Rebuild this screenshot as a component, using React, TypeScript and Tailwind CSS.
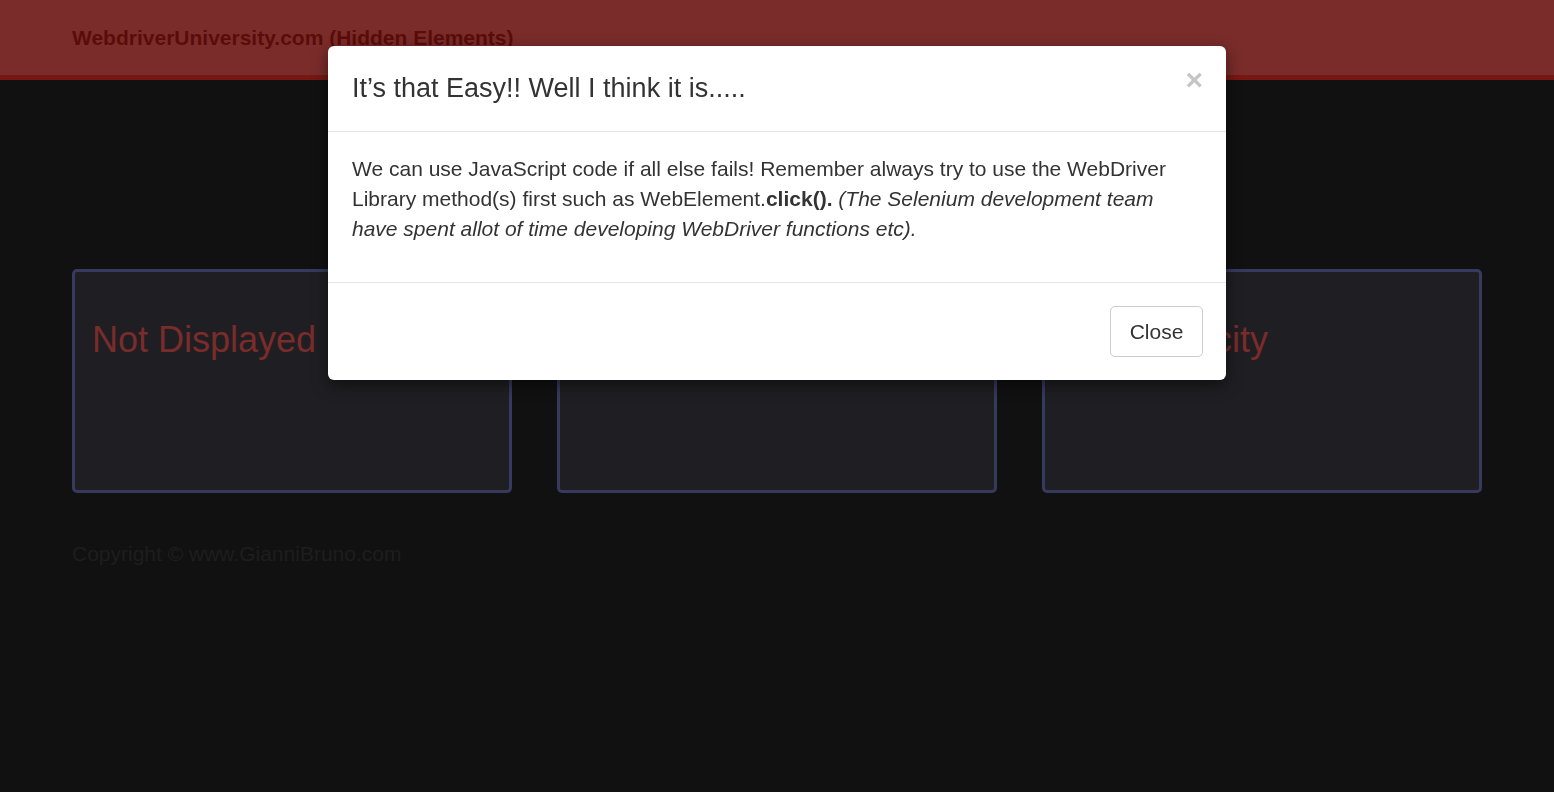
import { useState } from 'react';

const cards = ['Not Displayed', 'Visibility Hidden', 'Zero Opacity'];

export default function App() {
  const [open, setOpen] = useState(true);

  return (
    <div className="min-h-screen bg-[#111111] [font-family:'Liberation_Sans',Arial,sans-serif]">
      {/* Navbar */}
      <nav className="h-[80px] bg-[#7a2c2a] border-b-[5px] border-[#761714]">
        <div className="px-[72px] pt-[24px]">
          <span className="text-[21px] leading-[28px] font-bold text-[#5a0c09]">
            WebdriverUniversity.com (Hidden Elements)
          </span>
        </div>
      </nav>

      {/* Tarjetas */}
      <div className="px-[72px] pt-[189px] grid grid-cols-3 gap-[45px]">
        {cards.map((c) => (
          <div
            key={c}
            className="h-[224px] rounded-[5px] border-[3px] border-[#363a5e] bg-[#1f1f23] px-[17px] pt-[46px]"
          >
            <h2 className="text-[36px] leading-[44px] text-[#7a2c2a]">{c}</h2>
          </div>
        ))}
      </div>

      <footer className="px-[72px] pt-[47px]">
        <p className="text-[21px] leading-[28px] text-[#1e1e1e]">Copyright © www.GianniBruno.com</p>
      </footer>

      {/* Modal */}
      {open && (
        <div className="fixed inset-0 flex justify-center pt-[46px]">
          <div className="w-[898px] h-fit bg-white rounded-[6px] shadow-[0_5px_15px_rgba(0,0,0,0.5)]">
            <div className="flex items-start justify-between border-b border-[#e5e5e5] h-[86px] pl-[24px] pr-[23px]">
              <h4 className="pt-[24px] text-[27px] leading-[36px] text-[#333333]">
                It’s that Easy!! Well I think it is.....
              </h4>
              <button
                type="button"
                onClick={() => setOpen(false)}
                className="pt-[19px] text-[30px] leading-[30px] font-bold text-[#c5c5c5]"
              >
                ×
              </button>
            </div>
            <div className="border-b border-[#e5e5e5] px-[24px] pt-[22px] pb-[38px]">
              <p className="text-[21px] leading-[30px] text-[#333333]">
                We can use JavaScript code if all else fails! Remember always try to use the WebDriver Library
                method(s) first such as WebElement.<b>click().</b>{' '}
                <i>(The Selenium development team have spent allot of time developing WebDriver functions etc).</i>
              </p>
            </div>
            <div className="flex justify-end px-[23px] pt-[23px] pb-[23px]">
              <button
                type="button"
                onClick={() => setOpen(false)}
                className="w-[93px] h-[51px] rounded-[5px] border border-[#cccccc] text-[21px] text-[#333333]"
              >
                Close
              </button>
            </div>
          </div>
        </div>
      )}
    </div>
  );
}
